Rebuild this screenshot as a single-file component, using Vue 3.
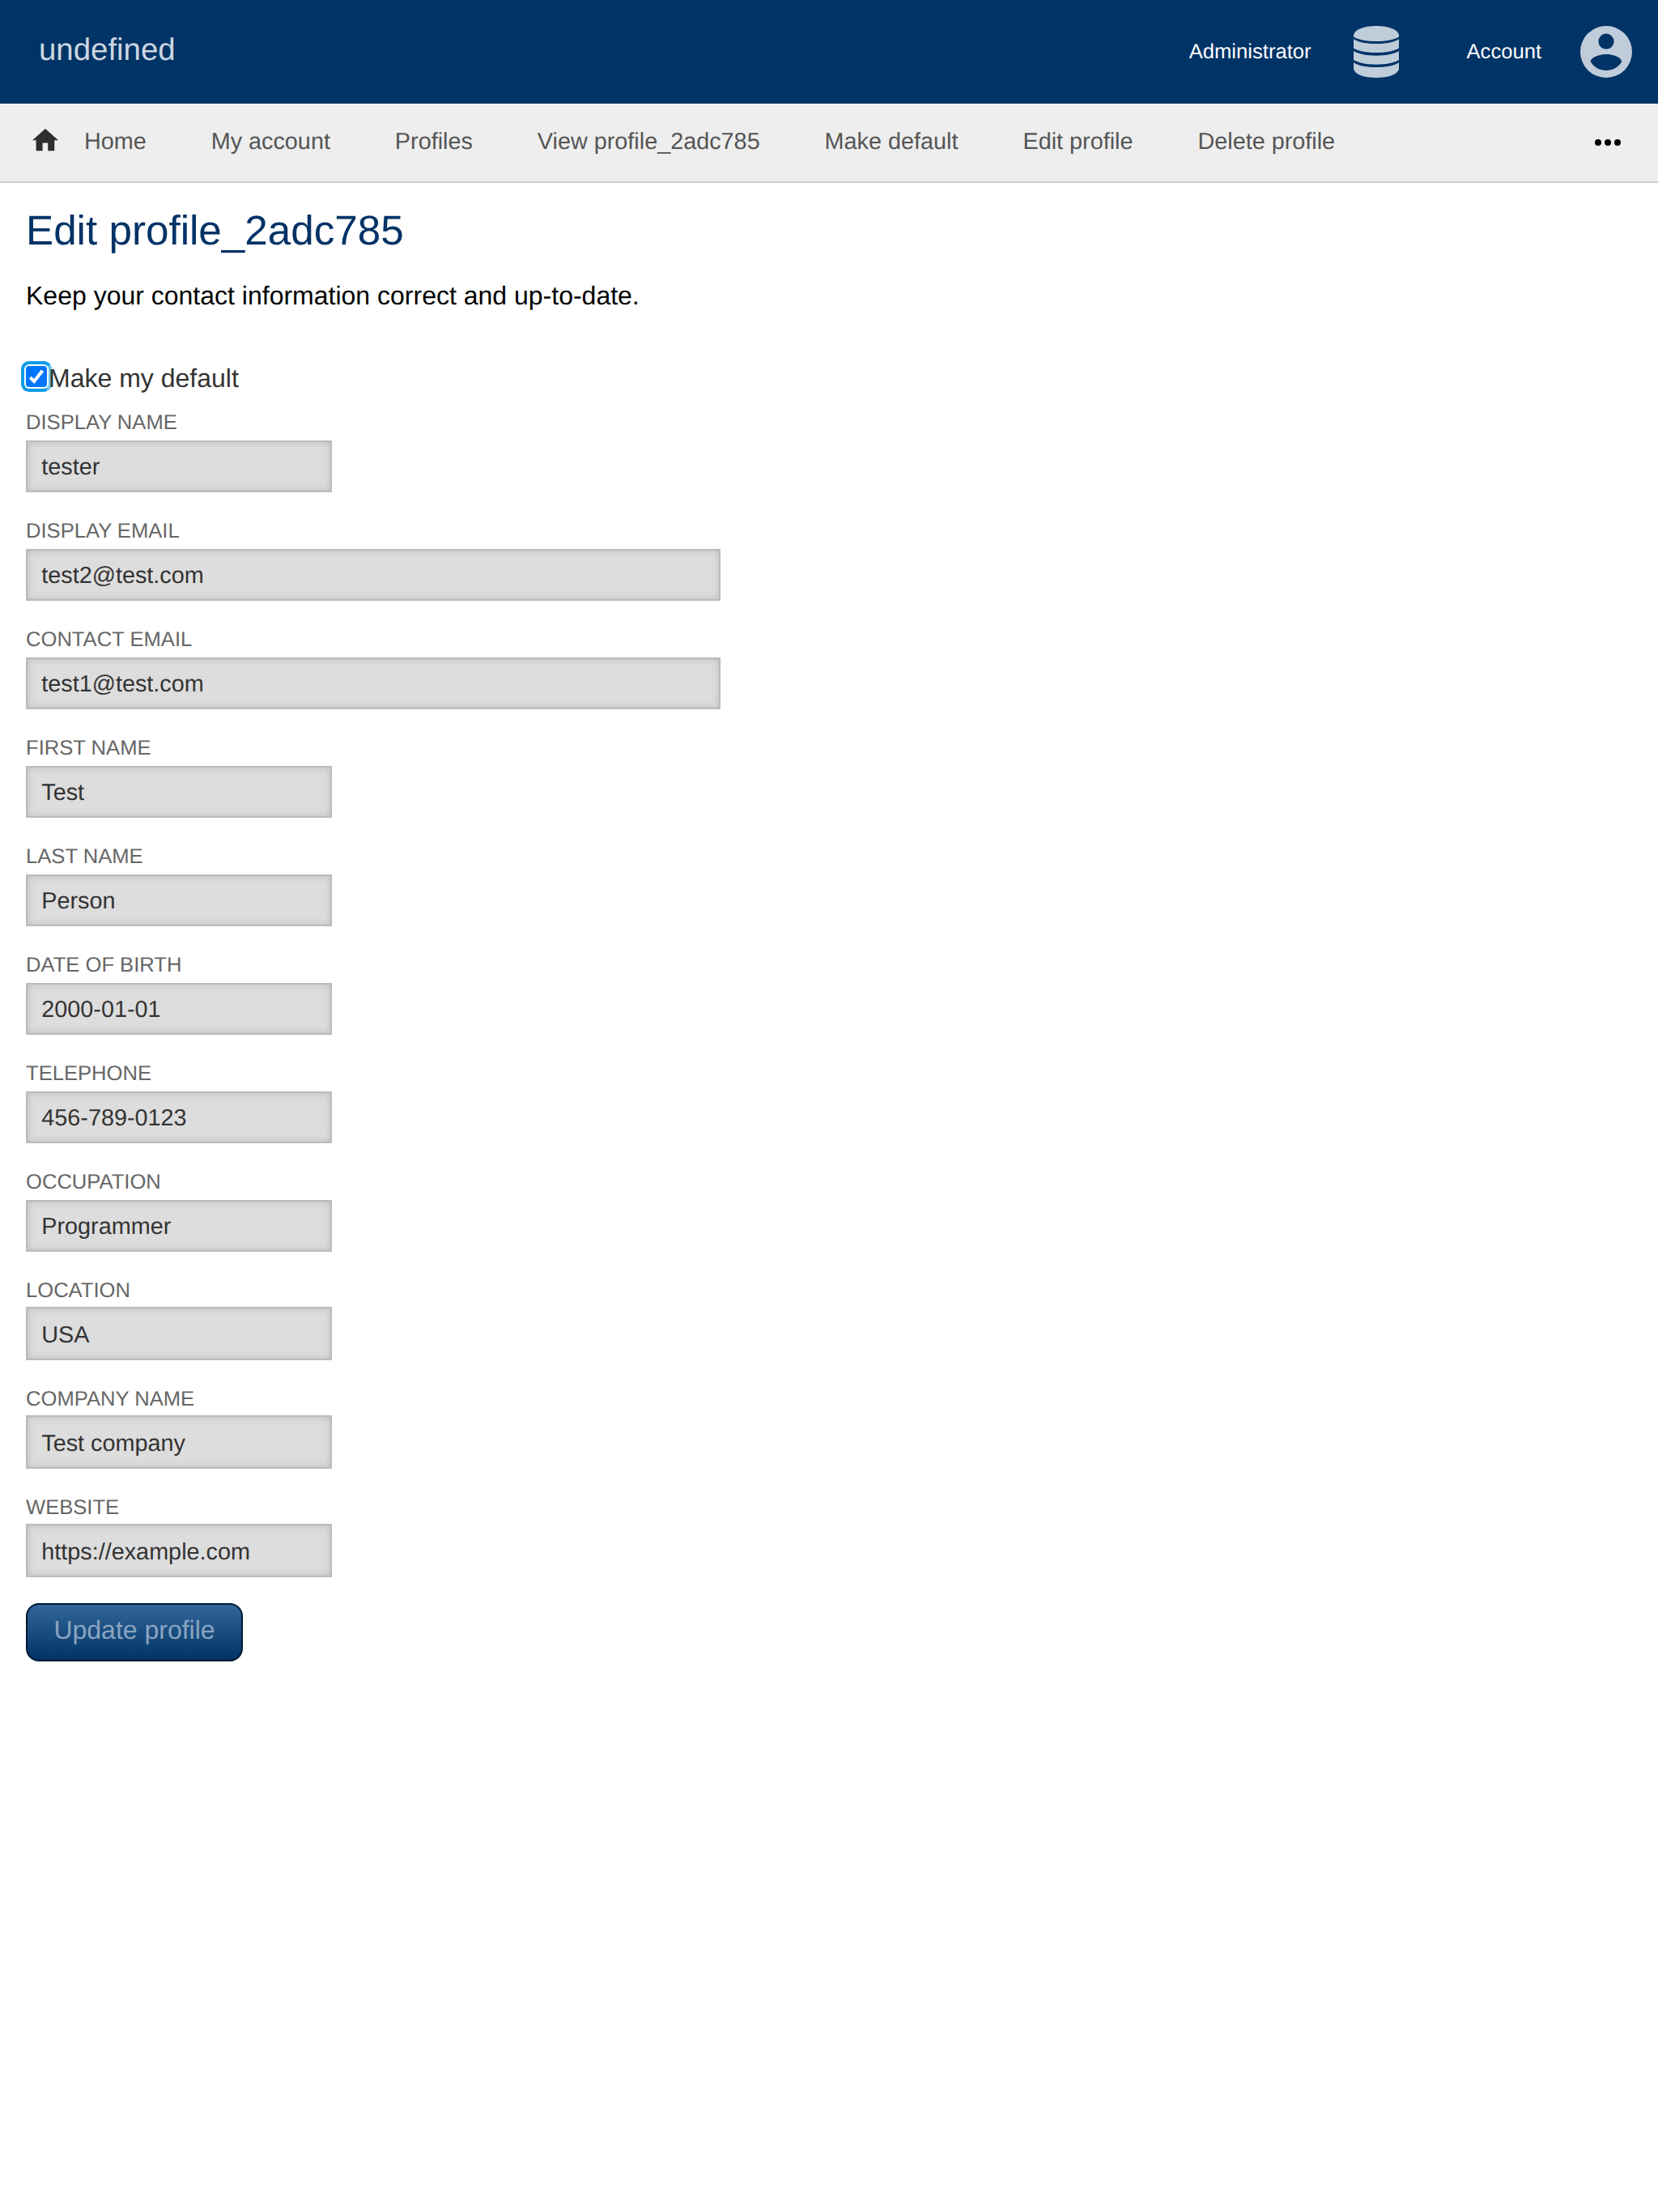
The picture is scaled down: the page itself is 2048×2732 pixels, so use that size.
<script setup>
const links = ['Home', 'My account', 'Profiles', 'View profile_2adc785', 'Make default', 'Edit profile', 'Delete profile']
const fields = [
  { label: 'Display name', value: 'tester' },
  { label: 'Display email', value: 'test2@test.com', wide: true },
  { label: 'Contact email', value: 'test1@test.com', wide: true },
  { label: 'First name', value: 'Test' },
  { label: 'Last name', value: 'Person' },
  { label: 'Date of birth', value: '2000-01-01' },
  { label: 'Telephone', value: '456-789-0123' },
  { label: 'Occupation', value: 'Programmer' },
  { label: 'Location', value: 'USA', tall: true },
  { label: 'Company name', value: 'Test company', tall: true },
  { label: 'Website', value: 'https://example.com', tall: true }
]
</script>

<template>
  <div class="page">
    <header class="header">
      <span class="brand">undefined</span>
      <a class="admin">Administrator</a>
      <svg class="db" viewBox="0 0 56 64">
        <path d="M0 13.5V11C2 4 13 0 28 0S54 4 56 11V13.500C49 17.500 40 19 28 19S7 17.500 0 13.500Z" />
        <path d="M0 16.300C7 20.500 16 22 28 22S49 20.500 56 16.300V27.500C49 31.500 40 33 28 33S7 31.500 0 27.500Z" />
        <path d="M0 31C7 35 16 36.700 28 36.700S49 35 56 31V42C49 46 40 47.700 28 47.700S7 46 0 42Z" />
        <path d="M0 45.300C7 49.500 16 51 28 51S49 49.500 56 45.300V53.500C54 60 43 64 28 64S2 60 0 53.500Z" />
      </svg>
      <a class="account">Account</a>
      <svg class="user" viewBox="0 0 64 64">
        <path fill-rule="evenodd" d="M32 0a32 32 0 1 0 0 64a32 32 0 1 0 0-64ZM32 9.600a9.600 9.600 0 1 1 0 19.200a9.600 9.600 0 1 1 0-19.200ZM12.800 44.200C13 38 25.600 35 32 35S51 38 51.200 44.200C47 51 40 55 32 55S17 51 12.800 44.200Z" />
      </svg>
    </header>
    <nav class="nav">
      <svg class="home" viewBox="0 0 32 28"><path d="M16 0L0 14.200H4.600V27.200H12.600V17.600H19.200V27.200H27.200V14.200H32Z" /></svg>
      <a v-for="link in links" :key="link">{{ link }}</a>
      <svg class="more" viewBox="0 0 32 8"><circle cx="4" cy="4" r="4" /><circle cx="16" cy="4" r="4" /><circle cx="28" cy="4" r="4" /></svg>
    </nav>
    <main class="main">
      <h1>Edit profile_2adc785</h1>
      <p>Keep your contact information correct and up-to-date.</p>
      <form>
        <label class="check">
          <span class="box"><svg viewBox="0 0 26 26"><path d="M5.300 14.300L10.200 19L20.500 5.800" /></svg></span>
          <span class="check-text">Make my default</span>
        </label>
        <div v-for="f in fields" :key="f.label" class="field" :class="{ wide: f.wide, tall: f.tall }">
          <label>{{ f.label }}</label>
          <input type="text" :value="f.value">
        </div>
        <button type="button"><span>Update profile</span></button>
      </form>
    </main>
  </div>
</template>

<style>
body { margin: 0; background: #fff; }
</style>

<style scoped>
.page {
  font-family: "Liberation Sans", Arial, sans-serif;
  font-size: 32px;
  color: #000;
  min-height: 2732px;
  text-rendering: geometricPrecision;
}
.header {
  box-sizing: border-box;
  height: 128px;
  padding: 0 32px 0 48px;
  background: #036;
  display: flex;
  align-items: center;
  color: #fff;
  font-size: 25.6px;
}
.brand { font-size: 38.4px; line-height: 44px; color: #ccd6e0; padding-bottom: 5px; margin-right: auto; }
.header svg { fill: #bfccd9; height: 64px; }
.db { width: 56px; margin: 0 84px 0 52px; }
.user { width: 64px; margin-left: 48px; }
.nav {
  height: 96px;
  background: #eee;
  border-bottom: 2px solid #ccc;
  display: flex;
  align-items: center;
  font-size: 28.8px;
  color: #555;
}
.nav a { line-height: 34px; margin-right: 79.95px; padding-bottom: 2px; }
.home { width: 32px; height: 28px; margin: 0 31.9px 7px 40px; fill: #2e2e2e; }
.more { width: 32px; height: 8px; margin-left: auto; margin-right: 46px; fill: #000; }
.main { padding: 0 32px; }
h1 { margin: 0; padding-top: 29px; font-size: 51.2px; line-height: 60px; font-weight: 400; color: #036; }
p { margin: 0; padding-top: 32px; line-height: 36px; }
.check { display: flex; height: 57px; margin-top: 66px; color: #333; line-height: 36px; }
.box {
  position: relative;
  width: 26px;
  height: 26px;
  margin-top: 3px;
  background: #0075ff;
  border-radius: 4px;
  box-shadow: 0 0 0 2px #fff, 0 0 0 6px #109ce8;
}
.box::after {
  content: "";
  position: absolute;
  left: 26px;
  top: -4px;
  width: 6px;
  height: 36px;
  background: rgba(255, 255, 255, 0.4);
  clip-path: polygon(100% 0, 100% 100%, 0 100%, 0 16%);
}
.box svg { display: block; width: 26px; height: 26px; fill: none; stroke: #fff; stroke-width: 4; }
.check-text { position: relative; z-index: 1; margin-left: 2px; }
.field { height: 134px; }
.field label {
  box-sizing: border-box;
  display: block;
  height: 38px;
  padding-top: 1px;
  line-height: 30px;
  font-size: 25.6px;
  text-transform: uppercase;
  color: #666;
}
.field input {
  box-sizing: border-box;
  display: block;
  width: 378px;
  height: 64px;
  margin: 0;
  padding: 2px 17.28px 0;
  border: 2px solid #bbb;
  border-radius: 0;
  background: #ddd;
  box-shadow: inset 0 0 10px #bbb;
  color: #333;
  font: 28.8px "Liberation Sans", Arial, sans-serif;
  text-rendering: geometricPrecision;
  outline: none;
}
.field.wide input { width: 858px; }
.field.tall input { height: 66px; margin-top: -2px; padding-top: 4px; }
button {
  display: block;
  box-sizing: border-box;
  width: 268px;
  height: 72px;
  margin: 0;
  padding: 0 0 6px;
  border: 2px solid #001a33;
  border-radius: 16px;
  background: linear-gradient(#369, #036);
  color: #8aa5c0;
  font: 32px "Liberation Sans", Arial, sans-serif;
  text-rendering: geometricPrecision;
}
</style>
